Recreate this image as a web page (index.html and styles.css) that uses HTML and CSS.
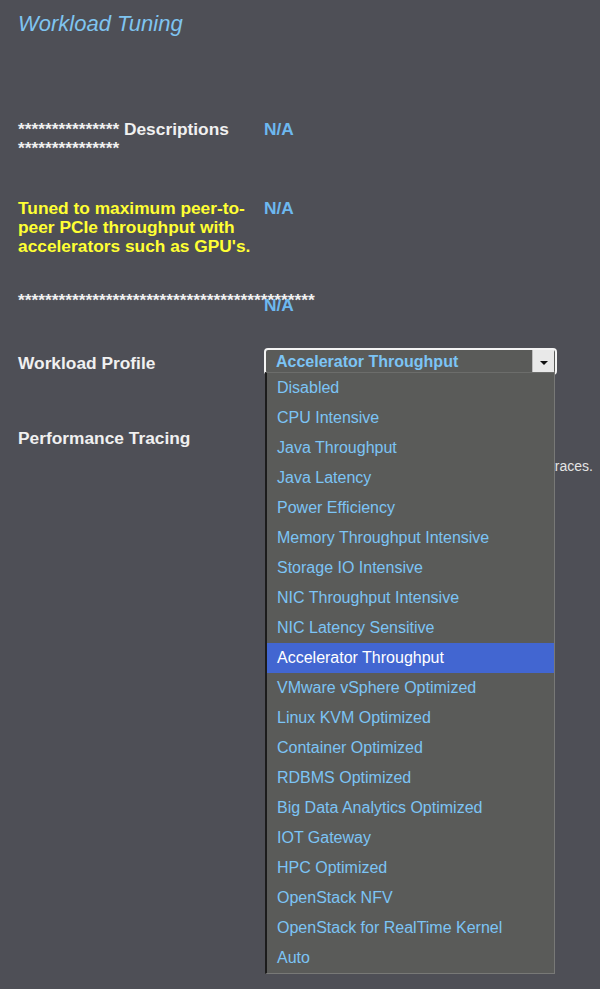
FILE: index.html
```html
<!DOCTYPE html>
<html lang="en">
<head>
<meta charset="utf-8">
<title>Workload Tuning</title>
<link rel="stylesheet" href="styles.css">
</head>
<body>
<div class="page">
  <h1 class="title">Workload Tuning</h1>
  <div class="form">
    <div class="row row-desc">
      <div class="label">*************** Descriptions ***************</div>
      <div class="value na">N/A</div>
    </div>
    <div class="row row-tuned">
      <div class="label yellow">Tuned to maximum peer-to-peer PCIe throughput with accelerators such as GPU's.</div>
      <div class="value na">N/A</div>
    </div>
    <div class="row row-stars">
      <div class="label stars">********************************************</div>
      <div class="value na na-low">N/A</div>
    </div>
    <div class="row row-profile">
      <div class="label label-profile">Workload Profile</div>
      <div class="value">
        <div class="select">
          <span class="select-text">Accelerator Throughput</span>
          <span class="select-btn"><span class="tri"></span></span>
          <ul class="menu">
            <li>Disabled</li>
            <li>CPU Intensive</li>
            <li>Java Throughput</li>
            <li>Java Latency</li>
            <li>Power Efficiency</li>
            <li>Memory Throughput Intensive</li>
            <li>Storage IO Intensive</li>
            <li>NIC Throughput Intensive</li>
            <li>NIC Latency Sensitive</li>
            <li class="active">Accelerator Throughput</li>
            <li>VMware vSphere Optimized</li>
            <li>Linux KVM Optimized</li>
            <li>Container Optimized</li>
            <li>RDBMS Optimized</li>
            <li>Big Data Analytics Optimized</li>
            <li>IOT Gateway</li>
            <li>HPC Optimized</li>
            <li>OpenStack NFV</li>
            <li>OpenStack for RealTime Kernel</li>
            <li>Auto</li>
          </ul>
        </div>
      </div>
    </div>
    <div class="row row-trace">
      <div class="label">Performance Tracing</div>
      <div class="value">
        <p class="help">When enabled, collects performance traces.</p>
      </div>
    </div>
  </div>
</div>
</body>
</html>
```

FILE: styles.css
```css
html, body {
  margin: 0;
  padding: 0;
}
body {
  background: #4e4f56;
  font-family: "Liberation Sans", Arial, sans-serif;
  width: 600px;
  height: 989px;
  overflow: hidden;
}
.page {
  padding-left: 18px;
}
.title {
  margin: 0;
  padding-top: 11px;
  font-size: 22px;
  line-height: 26px;
  font-style: italic;
  font-weight: normal;
  color: #7fc4f0;
}
.form {
  display: flex;
  flex-direction: column;
}
.row {
  display: grid;
  grid-template-columns: 246px 1fr;
  align-items: start;
}
.label {
  font-size: 13pt;
  line-height: 19px;
  font-weight: bold;
  color: #f0f0f0;
  padding-right: 6px;
}
.yellow {
  color: #ffff33;
}
.stars {
  white-space: nowrap;
}
.value {
  font-size: 13pt;
  line-height: 19px;
}
.na {
  color: #6db8ef;
  font-weight: bold;
}
.na-low {
  padding-top: 5px;
}
.row-desc {
  margin-top: 83px;
}
.row-tuned {
  margin-top: 41px;
}
.row-stars {
  margin-top: 35px;
}
.row-profile {
  margin-top: 33px;
}
.label-profile {
  padding-top: 6px;
}
.row-trace {
  margin-top: 54px;
}
.select {
  position: relative;
  width: 293px;
  height: 27px;
  box-sizing: border-box;
  border: 2px solid #f4f4f4;
  border-radius: 4px;
  background: #5a5b59;
  display: flex;
  align-items: center;
}
.select-text {
  flex: 1;
  padding-left: 10px;
  font-size: 16px;
  font-weight: bold;
  color: #7cc4f5;
  line-height: 20px;
}
.select-btn {
  width: 21px;
  height: 23px;
  align-self: flex-start;
  background: #e9e9e9;
  border-left: 1px solid #bdbdbd;
  display: flex;
  justify-content: center;
  align-items: center;
  margin-right: 1px;
}
.tri {
  width: 0;
  height: 0;
  border-left: 4px solid transparent;
  border-right: 4px solid transparent;
  border-top: 4px solid #111;
  margin-top: 3px;
}
.menu {
  position: absolute;
  top: 22px;
  left: -1px;
  width: 290px;
  box-sizing: border-box;
  margin: 0;
  padding: 0;
  list-style: none;
  background: #5a5b59;
  border-left: 2px solid #1c1c1c;
  border-right: 1px solid #787977;
  border-bottom: 1px solid #787977;
  border-top: 1px solid #6c6d6b;
  z-index: 2;
}
.menu li {
  height: 30px;
  line-height: 30px;
  padding-left: 10px;
  font-size: 16px;
  font-weight: normal;
  color: #7cc4f5;
  white-space: nowrap;
}
.menu li.active {
  background: #4266d1;
  color: #ffffff;
}
.help {
  margin: 29px 0 0;
  width: 329px;
  text-align: right;
  font-size: 14px;
  line-height: 17px;
  color: #e4e4e4;
}
```
